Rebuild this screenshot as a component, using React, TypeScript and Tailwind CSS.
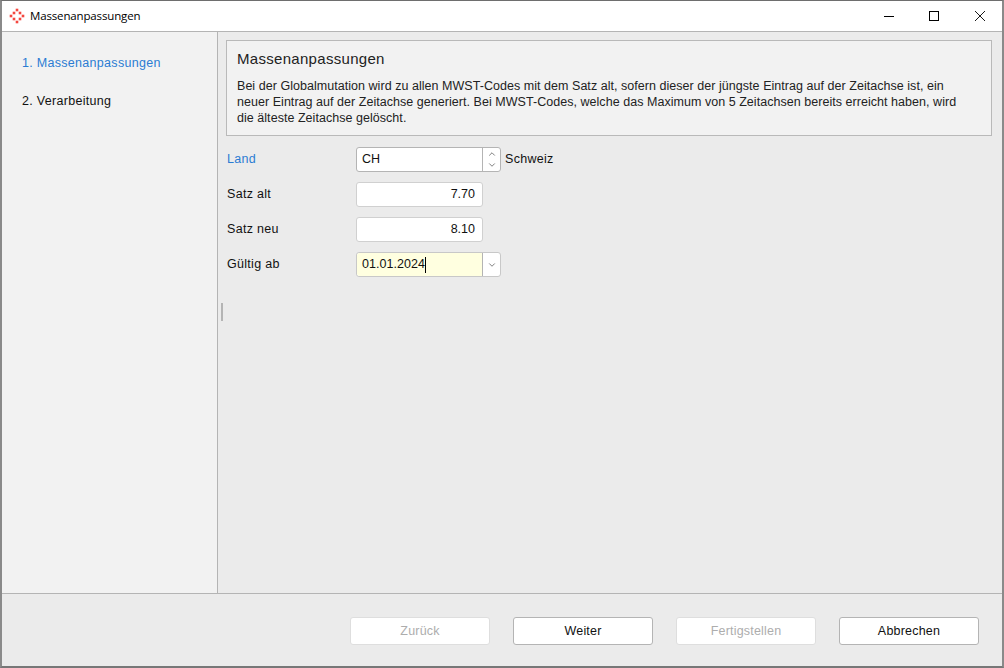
import { ChevronUp, ChevronDown } from "lucide-react";

const font = "font-['Liberation_Sans',Arial,sans-serif]";

const Logo = () => (
  <svg width="16" height="16" viewBox="0 0 16 16" className="shrink-0">
    <g fill="#f4473f">
      <rect x="6.7" y="0.7" width="2.6" height="2.6" />
      <rect x="3.7" y="3.7" width="2.6" height="2.6" />
      <rect x="9.7" y="3.7" width="2.6" height="2.6" />
      <rect x="0.7" y="6.7" width="2.6" height="2.6" />
      <rect x="12.7" y="6.7" width="2.6" height="2.6" />
      <rect x="3.7" y="9.7" width="2.6" height="2.6" />
      <rect x="9.7" y="9.7" width="2.6" height="2.6" />
      <rect x="6.7" y="12.7" width="2.6" height="2.6" />
    </g>
  </svg>
);

const Row = ({ label, blue, children }: { label: string; blue?: boolean; children: React.ReactNode }) => (
  <div className="flex h-[25px] items-center">
    <span className={`w-[129px] text-[12.5px] tracking-[0.3px] ${blue ? "text-[#2b7cd3]" : "text-[#111]"}`}>{label}</span>
    {children}
  </div>
);

const WizardButton = ({ label, disabled }: { label: string; disabled?: boolean }) => (
  <button
    className={`h-[28px] w-[140px] rounded-[3px] border bg-white text-[12.5px] tracking-[0.2px] ${
      disabled ? "border-[#dedede] text-[#adadad]" : "border-[#b4b4b4] text-[#111]"
    }`}
  >
    {label}
  </button>
);

export default function App() {
  return (
    <div className={`${font} flex h-[668px] w-[1004px] flex-col overflow-hidden border-x-2 border-t border-b-2 border-x-[#8a8a8a] border-t-[#6e6e6e] border-b-[#777] bg-[#ebebeb]`}>
      {/* title bar */}
      <div className="flex h-[31px] shrink-0 items-center border-b border-[#b4b4b4] bg-white">
        <div className="ml-[7px] flex items-center gap-[5px]">
          <Logo />
          <span className="font-['Open_Sans',sans-serif] text-[11.5px] tracking-[-0.15px] text-black">Massenanpassungen</span>
        </div>
        <div className="ml-auto flex h-full text-black">
          <div className="flex w-[46px] items-center justify-center">
            <svg width="10" height="10" viewBox="0 0 10 10"><path d="M0 5.5H10" stroke="currentColor" /></svg>
          </div>
          <div className="flex w-[46px] items-center justify-center pr-[2px]">
            <svg width="10" height="10" viewBox="0 0 10 10"><rect x="0.5" y="0.5" width="9" height="9" fill="none" stroke="currentColor" /></svg>
          </div>
          <div className="flex w-[44px] items-center justify-center">
            <svg width="10" height="10" viewBox="0 0 10 10"><path d="M0 0L10 10M10 0L0 10" stroke="currentColor" strokeWidth="0.9" /></svg>
          </div>
        </div>
      </div>

      <div className="flex min-h-0 flex-1">
        {/* steps */}
        <div className="flex w-[216px] shrink-0 flex-col gap-[23px] border-r border-[#b4b4b4] bg-[#f2f2f2] pl-[20px] pt-[24px] text-[12.5px] tracking-[0.3px]">
          <div className="h-[15px] leading-[15px] text-[#2b7cd3]">1. Massenanpassungen</div>
          <div className="h-[15px] leading-[15px] text-[#111]">2. Verarbeitung</div>
        </div>

        {/* splitter grip */}
        <div className="flex w-[8px] shrink-0 items-center justify-center pb-[2px]">
          <div className="h-[18px] w-[2px] bg-[#b4b4b4]" />
        </div>

        <div className="flex min-w-0 flex-1 flex-col pr-[10px] pt-[8px]">
          <div className="h-[96px] border border-[#b9b9b9] bg-[#f2f2f2] pl-[10px] pr-[8px] pt-[9px]">
            <div className="text-[15px] leading-[18px] tracking-[0.3px] text-[#222]">Massenanpassungen</div>
            <p className="mt-[10px] whitespace-nowrap text-[12.5px] leading-[16px] tracking-[0.04px] text-[#222]">
              Bei der Globalmutation wird zu allen MWST-Codes mit dem Satz alt, sofern dieser der jüngste Eintrag auf der Zeitachse ist, ein
              <br />
              neuer Eintrag auf der Zeitachse generiert. Bei MWST-Codes, welche das Maximum von 5 Zeitachsen bereits erreicht haben, wird
              <br />
              die älteste Zeitachse gelöscht.
            </p>
          </div>

          <div className="ml-px mt-[11px] flex flex-col gap-[10px]">
            <Row label="Land" blue>
              <div className="flex h-full w-[145px] rounded-[3px] border border-[#b4b4b4] bg-white text-[12.5px] text-[#111]">
                <span className="flex-1 pl-[5px] leading-[23px]">CH</span>
                <div className="flex w-[18px] flex-col items-center justify-center gap-px border-l border-[#b4b4b4] text-[#333]">
                  <ChevronUp size={10} strokeWidth={1.5} />
                  <ChevronDown size={10} strokeWidth={1.5} />
                </div>
              </div>
              <span className="ml-[4px] text-[12.5px] tracking-[0.3px] text-[#111]">Schweiz</span>
            </Row>
            <Row label="Satz alt">
              <div className="h-full w-[127px] rounded-[3px] border border-[#d0d0d0] bg-white pr-[7px] text-right text-[12.5px] leading-[23px] text-[#111]">7.70</div>
            </Row>
            <Row label="Satz neu">
              <div className="h-full w-[127px] rounded-[3px] border border-[#d0d0d0] bg-white pr-[7px] text-right text-[12.5px] leading-[23px] text-[#111]">8.10</div>
            </Row>
            <Row label="Gültig ab">
              <div className="flex h-full w-[145px] rounded-[3px] border border-[#c8c8c8] bg-white text-[12.5px] tracking-[0.05px] text-[#111]">
                <div className="flex flex-1 items-center rounded-l-[3px] bg-[#ffffe0] pl-[5px]">
                  <span>01.01.2024</span>
                  <span className="h-[16px] w-px bg-black" />
                </div>
                <div className="flex w-[18px] items-center justify-center border-l border-[#b4b4b4] text-[#333]">
                  <ChevronDown size={10} strokeWidth={1.5} />
                </div>
              </div>
            </Row>
          </div>
        </div>
      </div>

      {/* footer */}
      <div className="flex h-[73px] shrink-0 justify-end gap-[23px] border-t border-[#b4b4b4] pr-[23px] pt-[23px]">
        <WizardButton label="Zurück" disabled />
        <WizardButton label="Weiter" />
        <WizardButton label="Fertigstellen" disabled />
        <WizardButton label="Abbrechen" />
      </div>
    </div>
  );
}
